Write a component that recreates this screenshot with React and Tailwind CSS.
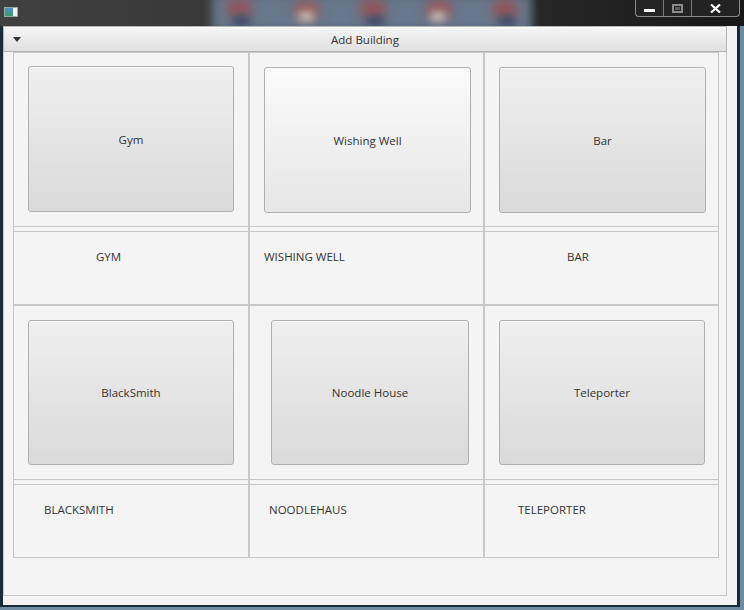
export default function App() {
  const cols = [236, 235, 235];
  const sections = [
    [
      { btn: "Gym", ml: 14, mt: 13, w: 206, h: 146, label: "GYM", lx: 82, light: false },
      { btn: "Wishing Well", ml: 14, mt: 14, w: 207, h: 146, label: "WISHING WELL", lx: 14, light: true },
      { btn: "Bar", ml: 14, mt: 14, w: 207, h: 146, label: "BAR", lx: 82, light: false },
    ],
    [
      { btn: "BlackSmith", ml: 14, mt: 14, w: 206, h: 145, label: "BLACKSMITH", lx: 30, light: false },
      { btn: "Noodle House", ml: 21, mt: 14, w: 198, h: 145, label: "NOODLEHAUS", lx: 19, light: false },
      { btn: "Teleporter", ml: 14, mt: 14, w: 206, h: 145, label: "TELEPORTER", lx: 33, light: false },
    ],
  ];

  return (
    <div className="w-[744px] h-[610px] overflow-hidden bg-[#6d8ca2] flex flex-col font-['Open_Sans',sans-serif] text-[11.5px] text-[#333333]">
      {/* Title bar */}
      <div className="relative h-[26px] w-[744px] overflow-hidden bg-gradient-to-r from-[#404040] via-[#333333] to-[#181818]">
        <div className="absolute left-[212px] top-[-6px] w-[320px] h-[38px] bg-[#67778c] blur-[5px]" />
        <div className="absolute left-[226px] top-[0px] w-[26px] h-[16px] rounded-full bg-[#9a5054] blur-[6px]" />
        <div className="absolute left-[294px] top-[2px] w-[26px] h-[16px] rounded-full bg-[#a05850] blur-[6px]" />
        <div className="absolute left-[360px] top-[1px] w-[26px] h-[16px] rounded-full bg-[#9a5050] blur-[6px]" />
        <div className="absolute left-[426px] top-[1px] w-[26px] h-[16px] rounded-full bg-[#9e5252] blur-[6px]" />
        <div className="absolute left-[492px] top-[1px] w-[26px] h-[16px] rounded-full bg-[#9a5050] blur-[6px]" />
        <div className="absolute left-[298px] top-[12px] w-[16px] h-[9px] rounded-full bg-[#cfcac2] blur-[4px]" />
        <div className="absolute left-[430px] top-[12px] w-[16px] h-[9px] rounded-full bg-[#cfcac2] blur-[4px]" />
        <div className="absolute left-[232px] top-[16px] w-[18px] h-[10px] rounded-full bg-[#3a4664] blur-[4px]" />
        <div className="absolute left-[366px] top-[16px] w-[18px] h-[10px] rounded-full bg-[#3a4664] blur-[4px]" />
        <div className="absolute left-[498px] top-[16px] w-[18px] h-[10px] rounded-full bg-[#3a4664] blur-[4px]" />
        {/* app icon */}
        <div className="absolute left-[4px] top-[7px] w-[14px] h-[10px] bg-[#f0f0f0] border border-[#9aa] flex">
          <div className="w-[8px] h-full bg-gradient-to-b from-[#4a8fc0] to-[#3a9a6a]" />
        </div>
        {/* window buttons */}
        <div className="absolute left-[635px] top-0 w-[105px] h-[17px] flex rounded-b-[4px] border border-t-0 border-[#8a8a8a] bg-[#262626]/70 overflow-hidden">
          <div className="w-[28px] h-full flex items-center justify-center border-r border-[#7a7a7a]">
            <div className="w-[11px] h-[3px] bg-white mt-[4px]" />
          </div>
          <div className="w-[28px] h-full flex items-center justify-center border-r border-[#7a7a7a]">
            <div className="w-[11px] h-[9px] border-[2px] border-[#8c8c8c] flex items-center justify-center">
              <div className="w-[5px] h-[3px] bg-[#5a5a5a]" />
            </div>
          </div>
          <div className="flex-1 h-full flex items-center justify-center">
            <svg width="11" height="9" viewBox="0 0 11 9">
              <path d="M1 0.5 L10 8.5 M10 0.5 L1 8.5" stroke="white" strokeWidth="2.2" />
            </svg>
          </div>
        </div>
      </div>

      {/* Window body */}
      <div className="w-[740px] h-[581px] border-l-[3px] border-r-[3px] border-b-[2px] border-[#1c2b38] bg-[#f4f4f4]">
        <div className="w-[724px]">
          {/* Titled pane header */}
          <div className="relative h-[26px] border border-[#b5b5b5] bg-gradient-to-b from-[#f6f6f6] to-[#e0e0e0] shadow-[inset_0_1px_0_#ffffff] flex items-center justify-center">
            <svg className="absolute left-[9px] top-[10px]" width="8" height="5" viewBox="0 0 8 5">
              <path d="M0 0 L8 0 L4 5 Z" fill="#333333" />
            </svg>
            <span className="leading-[16px] mt-[2px]">Add Building</span>
          </div>
          {/* Content */}
          <div className="border-x border-b border-[#c8c8c8] pl-[9px] pr-[7px] pb-[37px]">
            <div className="w-[706px] flex flex-col">
              {sections.map((row, si) => (
                <div key={si} className="flex">
                  {row.map((c, ci) => (
                    <div
                      key={ci}
                      style={{ width: cols[ci] }}
                      className="border border-[#c8c8c8] flex flex-col"
                    >
                      <div className="h-[173px]">
                        <div
                          style={{ marginLeft: c.ml, marginTop: c.mt, width: c.w, height: c.h }}
                          className={
                            "rounded-[3px] border border-[#b0b0b0] flex items-center justify-center shadow-[inset_0_1px_0_#fbfbfb] " +
                            (c.light
                              ? "bg-gradient-to-b from-[#fbfbfb] to-[#e6e6e6]"
                              : "bg-gradient-to-b from-[#efefef] to-[#dadada]")
                          }
                        >
                          <span className="leading-[16px] pt-[1px]">{c.btn}</span>
                        </div>
                      </div>
                      <div className="h-[6px] border-y border-[#c8c8c8]" />
                      <div className="h-[72px] pt-[17px]">
                        <div style={{ paddingLeft: c.lx }} className="leading-[16px] whitespace-nowrap">
                          {c.label}
                        </div>
                      </div>
                    </div>
                  ))}
                </div>
              ))}
            </div>
          </div>
        </div>
      </div>
    </div>
  );
}
